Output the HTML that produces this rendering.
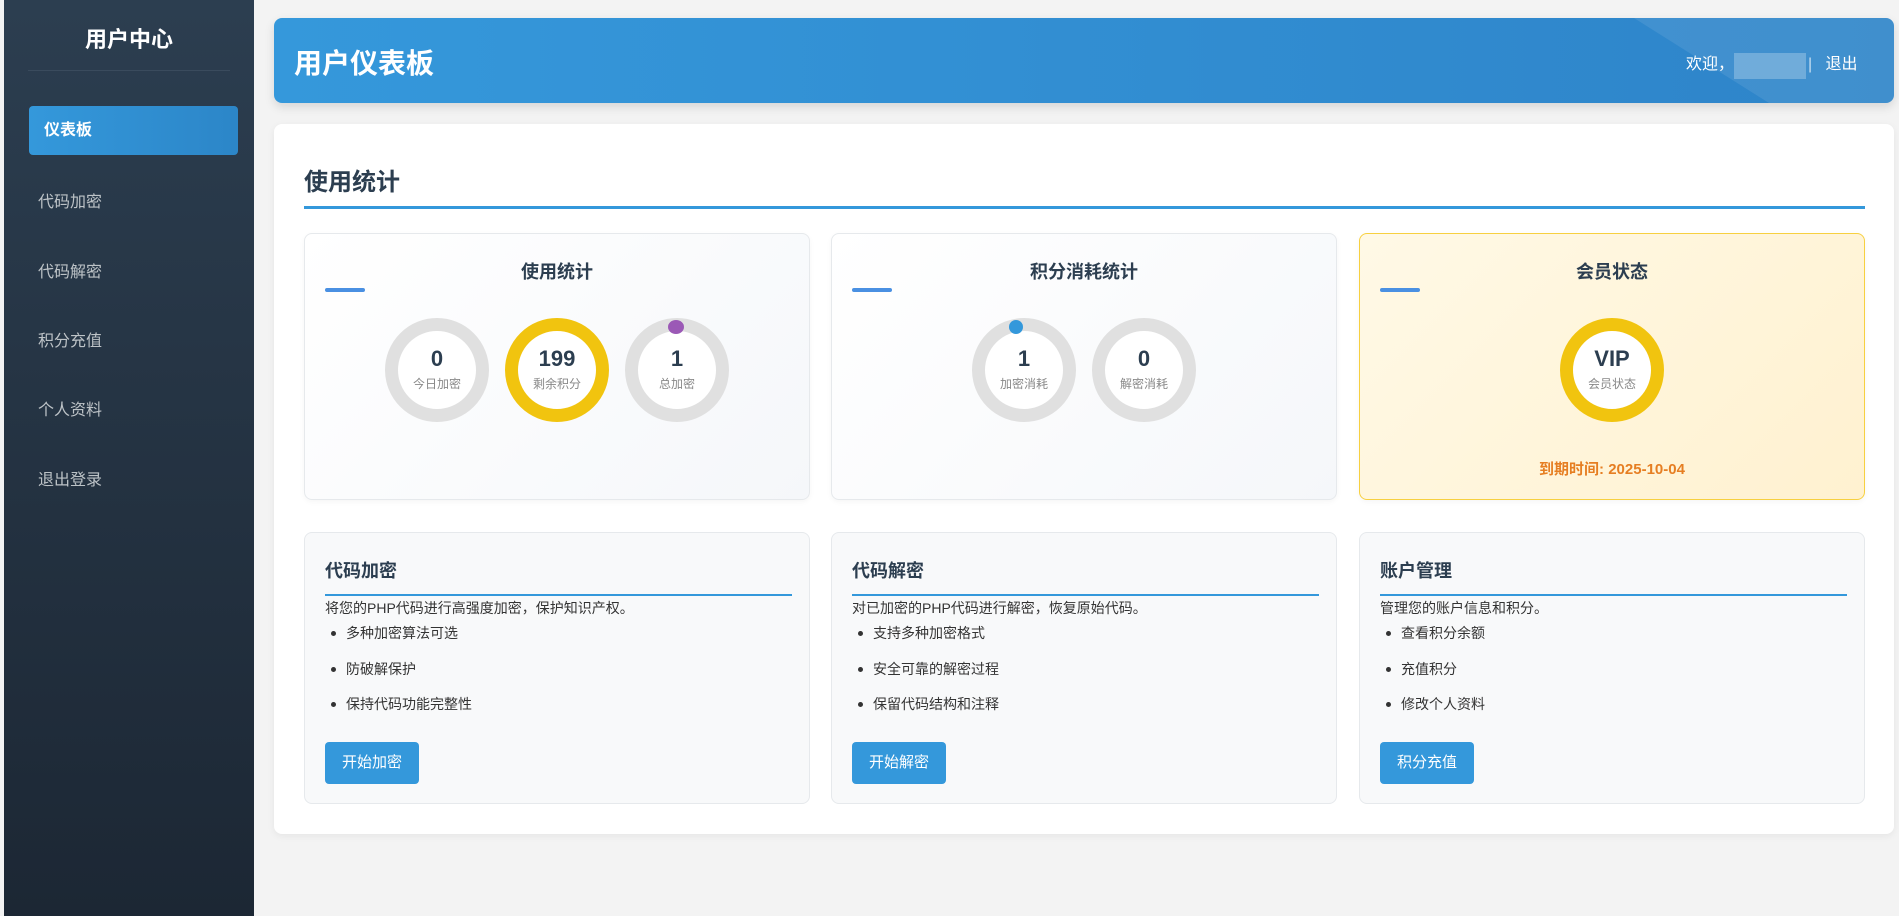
<!DOCTYPE html>
<html><head><meta charset="utf-8"><style>
*{margin:0;padding:0;box-sizing:border-box}
body{width:1899px;height:916px;background:#f3f3f3;font-family:"Liberation Sans","Noto Sans CJK SC",sans-serif;position:relative;overflow:hidden;color:#2c3e50}
.sb{position:absolute;left:4px;top:0;width:250px;height:916px;background:linear-gradient(180deg,#2c3e50,#1c2734)}
.sb h1{position:absolute;top:22px;left:0;width:100%;text-align:center;color:#fff;font-size:22px;font-weight:bold}
.sb .dv{position:absolute;left:24px;top:70px;width:202px;height:1px;background:#3a4b5d}
.act{position:absolute;left:25px;top:106px;width:209px;height:49px;border-radius:4px;background:linear-gradient(90deg,#3498db,#2c86c8);color:#fff;font-weight:bold;font-size:16px;line-height:49px;padding-left:15px}
.mi{position:absolute;left:34px;color:#bdc3c7;font-size:16px}
.hd{position:absolute;left:274px;top:18px;width:1620px;height:85px;border-radius:8px;background:linear-gradient(90deg,#3598db,#2e84c9);overflow:hidden;box-shadow:0 4px 10px rgba(0,0,0,.12)}
.hd .sh{position:absolute;right:-40px;top:0;width:300px;height:85px;background:rgba(255,255,255,.09);clip-path:polygon(0 0,100% 0,100% 100%,45% 100%)}
.hd h2{position:absolute;left:20px;top:24px;color:#fff;font-size:28px;font-weight:bold}
.hd .r{position:absolute;left:1412px;top:32px;color:#fff;font-size:16px}
.blur{position:absolute;background:rgba(255,255,255,.25)}
.mc{position:absolute;left:274px;top:124px;width:1620px;height:710px;background:#fff;border-radius:8px;box-shadow:0 2px 8px rgba(0,0,0,.06)}
.mc h2{position:absolute;left:30px;top:38px;font-size:24px;font-weight:bold}
.mc .ul{position:absolute;left:30px;top:82px;width:1561px;height:3px;background:#3498db}
.sc{position:absolute;top:109px;width:506px;height:267px;border:1px solid #e6e9ec;border-radius:8px;background:linear-gradient(135deg,#fff,#f5f7fa);box-shadow:0 2px 6px rgba(0,0,0,.04)}
.sc.vip{background:linear-gradient(135deg,#fff9e6,#fff1d0);border-color:#f7d040}
.sc h3{position:absolute;top:24px;width:100%;text-align:center;font-size:18px;font-weight:bold}
.sc .bar{position:absolute;left:20px;top:54px;width:40px;height:4px;border-radius:2px;background:#4a90e2}
.ring{position:absolute;top:84px;width:104px;height:104px;border-radius:50%;border:13px solid #e0e0e0;background:#fff;text-align:center}
.ring.y{border-color:#f1c40f}
.ring b{display:block;margin-top:14px;font-size:22px;line-height:28px}
.ring span{display:block;font-size:12px;color:#888;margin-top:2px}
.dot{position:absolute;top:-11px;left:30px;width:16px;height:14px;border-radius:50%}
.exp{position:absolute;top:224px;width:100%;text-align:center;color:#e67e22;font-weight:bold;font-size:15px}
.fc{position:absolute;top:408px;width:506px;height:272px;border:1px solid #e6e9ec;border-radius:8px;background:#f8f9fa}
.fc h3{position:absolute;left:20px;top:24px;font-size:18px;font-weight:bold}
.fc .ln{position:absolute;left:20px;top:61px;width:467px;height:2px;background:#3498db}
.fc p{position:absolute;left:20px;top:65px;font-size:14px;color:#333}
.fc li{position:absolute;left:41px;font-size:14px;color:#333;list-style:none}
.fc li:before{content:"";position:absolute;left:-15px;top:8px;width:5px;height:5px;border-radius:50%;background:#333}
.btn{position:absolute;left:20px;top:209px;width:94px;height:42px;border-radius:4px;background:#3498db;color:#fff;font-size:15px;text-align:center;line-height:42px}
</style></head><body>
<div class="sb"><h1>用户中心</h1><div class="dv"></div>
<div class="act">仪表板</div>
<div class="mi" style="top:188px">代码加密</div>
<div class="mi" style="top:258px">代码解密</div>
<div class="mi" style="top:327px">积分充值</div>
<div class="mi" style="top:396px">个人资料</div>
<div class="mi" style="top:466px">退出登录</div>
</div>
<div class="hd"><div class="sh"></div><h2>用户仪表板</h2>
<div class="blur" style="left:1460px;top:35px;height:26px;width:72px"></div>
<div class="r">欢迎，<span style="display:inline-block;width:74px"></span><span style="opacity:.7">|</span>&nbsp;&nbsp;&nbsp;退出</div></div>
<div class="mc"><h2>使用统计</h2><div class="ul"></div>
<div class="sc" style="left:30px"><h3>使用统计</h3><div class="bar"></div>
<div class="ring" style="left:80px"><b>0</b><span>今日加密</span></div>
<div class="ring y" style="left:200px"><b>199</b><span>剩余积分</span></div>
<div class="ring" style="left:320px"><div class="dot" style="background:#9b59b6"></div><b>1</b><span>总加密</span></div>
</div>
<div class="sc" style="left:557px"><h3>积分消耗统计</h3><div class="bar"></div>
<div class="ring" style="left:140px"><div class="dot" style="background:#3498db;left:24px;width:14px"></div><b>1</b><span>加密消耗</span></div>
<div class="ring" style="left:260px"><b>0</b><span>解密消耗</span></div>
</div>
<div class="sc vip" style="left:1085px"><h3>会员状态</h3><div class="bar"></div>
<div class="ring y" style="left:200px"><b>VIP</b><span>会员状态</span></div>
<div class="exp">到期时间: 2025-10-04</div>
</div>
<div class="fc" style="left:30px"><h3>代码加密</h3><div class="ln"></div><p>将您的PHP代码进行高强度加密，保护知识产权。</p>
<li style="top:90px">多种加密算法可选</li><li style="top:126px">防破解保护</li><li style="top:161px">保持代码功能完整性</li><div class="btn">开始加密</div></div>
<div class="fc" style="left:557px"><h3>代码解密</h3><div class="ln"></div><p>对已加密的PHP代码进行解密，恢复原始代码。</p>
<li style="top:90px">支持多种加密格式</li><li style="top:126px">安全可靠的解密过程</li><li style="top:161px">保留代码结构和注释</li><div class="btn">开始解密</div></div>
<div class="fc" style="left:1085px"><h3>账户管理</h3><div class="ln"></div><p>管理您的账户信息和积分。</p>
<li style="top:90px">查看积分余额</li><li style="top:126px">充值积分</li><li style="top:161px">修改个人资料</li><div class="btn">积分充值</div></div>
</div>
</body></html>
